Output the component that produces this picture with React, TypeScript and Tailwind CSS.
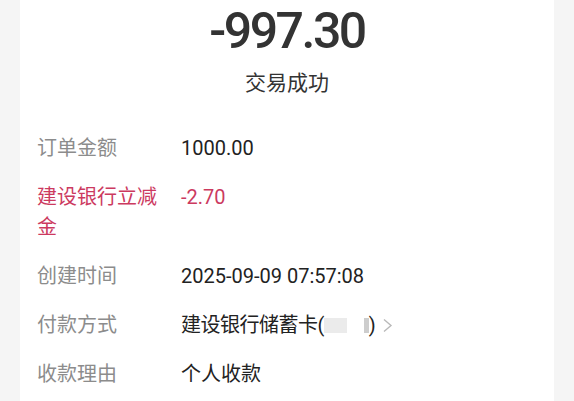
const rows: { label: string; value: React.ReactNode; red?: boolean }[] = [
  { label: '订单金额', value: '1000.00' },
  { label: '建设银行立减金', value: '-2.70', red: true },
  { label: '创建时间', value: '2025-09-09 07:57:08' },
  {
    label: '付款方式',
    value: (
      <span className="flex items-center">
        <span className="tracking-[-0.5px]">建设银行储蓄卡(</span>
        <span className="h-[15px] w-[23px] bg-[#ebebeb]" />
        <span className="ml-[17px] h-[15px] w-[5px] bg-[#cdcdcd]" />
        <span>)</span>
        <svg className="ml-[6px]" width="11" height="15" viewBox="0 0 11 15" fill="none">
          <polyline points="2,1.5 9,7.5 2,13.5" stroke="#b9b9b9" strokeWidth="1.4" />
        </svg>
      </span>
    ),
  },
  { label: '收款理由', value: '个人收款' },
];

export default function App() {
  return (
    <div className="h-[401px] w-full overflow-hidden bg-[#f5f5f5] px-[20px] font-['Roboto','Noto_Sans_CJK_SC',sans-serif]">
      <div className="h-full bg-white">
        <div className="flex flex-col items-center pt-[6px]">
          <div className="h-[50px] text-[50px] font-medium leading-[50px] tracking-[-2.5px] text-[#333333]">
            -997.30
          </div>
          <div className="mt-[12px] text-[21px] leading-[30px] text-[#333333]">交易成功</div>
        </div>
        <div className="mt-[35px] flex flex-col gap-[19px] pl-[17px]">
          {rows.map((r) => (
            <div key={r.label} className="flex text-[20px] leading-[30px]">
              <div className={`w-[128px] shrink-0 ${r.red ? 'text-[#cc3a5f]' : 'text-[#8c8c8c]'}`}>
                {r.label}
              </div>
              <div className={`ml-[16px] ${r.red ? 'text-[#cc3a5f]' : 'text-[#222222]'}`}>{r.value}</div>
            </div>
          ))}
        </div>
      </div>
    </div>
  );
}
